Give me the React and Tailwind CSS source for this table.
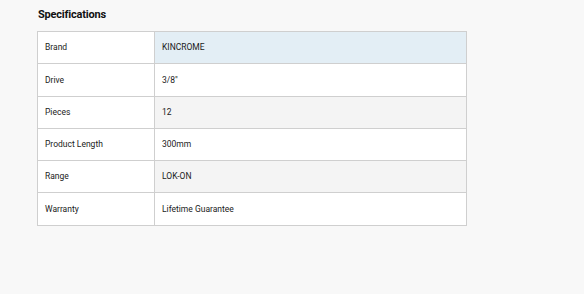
import React from 'react';

const specs = [
  { label: 'Brand', value: 'KINCROME', bg: 'bg-[#e3eef5]' },
  { label: 'Drive', value: '3/8"', bg: 'bg-white' },
  { label: 'Pieces', value: '12', bg: 'bg-[#f4f4f4]' },
  { label: 'Product Length', value: '300mm', bg: 'bg-white' },
  { label: 'Range', value: 'LOK-ON', bg: 'bg-[#f4f4f4]' },
  { label: 'Warranty', value: 'Lifetime Guarantee', bg: 'bg-white' },
];

// Specifications table
function App() {
  return (
    <div className="w-[584px] h-[294px] bg-[#f8f8f8] font-['Roboto',sans-serif] text-[#1a1a1a]">
      <div className="pl-[37px] pt-[8px]">
        <h2 className="pl-px text-[11px] font-bold leading-[14px] text-[#111] mb-[9px] tracking-[-0.2px]">Specifications</h2>
        <table className="w-[430px] border-collapse border border-[#cfcfcf] text-[8.5px]">
          <tbody>
            {specs.map((row) => (
              <tr key={row.label} className="h-[32.3px]">
                <td className="w-[117px] border border-[#cfcfcf] bg-white pl-[7px] align-middle">
                  {row.label}
                </td>
                <td className={`border border-[#cfcfcf] pl-[7px] align-middle ${row.bg}`}>
                  {row.value}
                </td>
              </tr>
            ))}
          </tbody>
        </table>
      </div>
    </div>
  );
}

export default App;
